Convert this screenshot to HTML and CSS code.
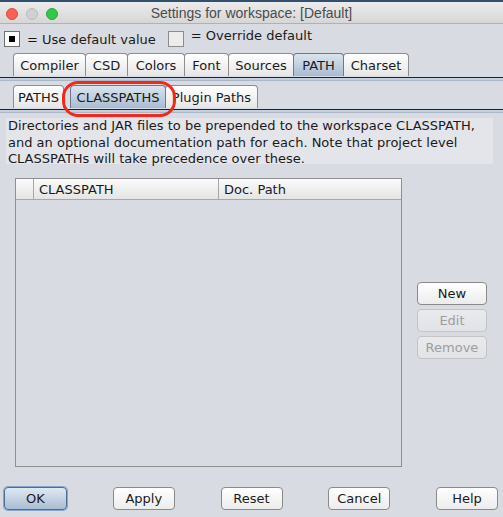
FILE: index.html
```html
<!DOCTYPE html>
<html lang="en">
<head>
    <meta charset="UTF-8">
    <title>Settings for workspace: [Default]</title>
    <link rel="stylesheet" href="styles.css">
</head>
<body>
    <div class="window">
        <div class="titlebar">
            <div class="lights">
                <span class="light red"></span>
                <span class="light gray"></span>
                <span class="light green"></span>
            </div>
            <div class="title">Settings for workspace: [Default]</div>
        </div>

        <div class="legend">
            <span class="check checked"><i></i></span>
            <span class="legend-text">= Use default value</span>
            <span class="check"></span>
            <span class="legend-text up">= Override default</span>
        </div>

        <ul class="tabs main">
            <li>Compiler</li>
            <li>CSD</li>
            <li>Colors</li>
            <li>Font</li>
            <li>Sources</li>
            <li class="active">PATH</li>
            <li>Charset</li>
        </ul>
        <div class="tabline"></div>

        <div class="subtabs-wrap">
            <ul class="tabs sub">
                <li class="paths">PATHS</li>
                <li class="active classpaths">CLASSPATHS</li>
                <li class="plugin">Plugin Paths</li>
            </ul>
            <div class="marker"></div>
        </div>
        <div class="tabline"></div>

        <p class="desc">Directories and JAR files to be prepended to the workspace CLASSPATH, and an optional documentation path for each. Note that project level CLASSPATHs will take precedence over these.</p>

        <div class="content">
            <div class="table">
                <div class="thead">
                    <div class="th first"></div>
                    <div class="th path">CLASSPATH</div>
                    <div class="th doc">Doc. Path</div>
                </div>
                <div class="tbody"></div>
            </div>
            <div class="side">
                <button class="btn">New</button>
                <button class="btn" disabled>Edit</button>
                <button class="btn" disabled>Remove</button>
            </div>
        </div>

        <div class="footer">
            <button class="btn default">OK</button>
            <button class="btn">Apply</button>
            <button class="btn">Reset</button>
            <button class="btn">Cancel</button>
            <button class="btn">Help</button>
        </div>
    </div>
</body>
</html>
```

FILE: styles.css
```css
body {
    margin: 0;
    background: #d8dbe1;
    font-family: "DejaVu Sans", sans-serif;
    font-size: 12px;
    color: #1a1a1a;
}

.window {
    width: 503px;
    height: 517px;
    border-top: 2px solid #34506e;
    box-sizing: border-box;
    display: flex;
    flex-direction: column;
}

/* Title bar */
.titlebar {
    position: relative;
    height: 21px;
    background: linear-gradient(to bottom, #ececec, #d6d6d6);
    border-bottom: 1px solid #b1b1b1;
    display: flex;
    align-items: center;
    justify-content: center;
}

.lights {
    position: absolute;
    left: 6px;
    top: 6px;
    display: flex;
    gap: 8px;
}

.light {
    width: 12px;
    height: 12px;
    border-radius: 50%;
    box-sizing: border-box;
}

.light.red {
    background: #fc5f57;
    border: 1px solid #de4a42;
}

.light.gray {
    background: #d0d0d0;
    border: 1px solid #bcbcbc;
}

.light.green {
    background: #34c84a;
    border: 1px solid #27a83a;
}

.title {
    font-family: "Liberation Sans", sans-serif;
    font-size: 14px;
    color: #4b4b4b;
    margin-top: 1px;
}

/* Legend */
.legend {
    height: 29px;
    display: flex;
    align-items: center;
    padding-left: 4px;
}

.check {
    width: 14px;
    height: 14px;
    border: 1px solid #8c8c8c;
    background: #ececec;
    display: flex;
    align-items: center;
    justify-content: center;
}

.check.checked {
    background: #fafafa;
    border-color: #6f6f6f;
}

.check i {
    width: 6px;
    height: 6px;
    background: #000;
}

.legend-text {
    margin-left: 7px;
    margin-right: 12px;
    font-size: 13px;
    position: relative;
    top: 1px;
}

.legend-text.up {
    top: -3px;
}

/* Tabs */
.tabs {
    list-style: none;
    margin: 0;
    padding: 0 0 0 13px;
    display: flex;
    height: 23px;
}

.tabs li {
    box-sizing: border-box;
    height: 23px;
    border: 1px solid #8e8e8e;
    border-bottom: none;
    border-radius: 4px 4px 0 0;
    background: linear-gradient(to bottom, #ffffff, #e6e6e6);
    display: flex;
    align-items: center;
    justify-content: center;
    font-size: 13px;
    margin-right: -1px;
}

.tabs li.active {
    background: linear-gradient(to bottom, #dbe4ee, #a8bcd1);
    border-color: #6b7a8c;
    z-index: 1;
}

.tabs.main li:nth-child(1) { width: 73px; }
.tabs.main li:nth-child(2) { width: 43px; }
.tabs.main li:nth-child(3) { width: 58px; }
.tabs.main li:nth-child(4) { width: 45px; }
.tabs.main li:nth-child(5) { width: 66px; }
.tabs.main li:nth-child(6) { width: 51px; }
.tabs.main li:nth-child(7) { width: 66px; }

.tabs.sub li.paths { width: 51px; }
.tabs.sub li.classpaths { width: 96px; margin-left: 7px; }
.tabs.sub li.plugin { width: 93px; }

.tabline {
    height: 2px;
    border-top: 1px solid #1c2432;
    border-bottom: 1px solid #a9b7c9;
    background: #c5cedb;
    margin-top: 1px;
    margin-bottom: 4px;
}

.subtabs-wrap {
    position: relative;
}

.marker {
    position: absolute;
    left: 62px;
    top: -4px;
    width: 114px;
    height: 36px;
    border: 3px solid #f0291c;
    border-radius: 16px;
    box-sizing: border-box;
    z-index: 2;
}

/* Description */
.desc {
    margin: 1px 10px 0 6px;
    padding: 0 2px;
    background: #e3e5ea;
    font-size: 13px;
    line-height: 16.5px;
    height: 46px;
}

/* Table + side buttons */
.content {
    display: flex;
    margin-top: 14px;
    padding-left: 15px;
}

.table {
    width: 387px;
    height: 289px;
    border: 1px solid #8f8f8f;
    box-sizing: border-box;
    display: flex;
    flex-direction: column;
}

.thead {
    height: 20px;
    display: flex;
    background: linear-gradient(to bottom, #fbfbfb, #e4e4e4);
    border-bottom: 1px solid #a7a7a7;
}

.th {
    font-size: 13px;
    display: flex;
    align-items: center;
    padding-left: 5px;
    border-right: 1px solid #a7a7a7;
}

.th.first {
    width: 12px;
}

.th.path {
    width: 179px;
}

.th.doc {
    flex: 1;
    border-right: none;
}

.tbody {
    flex: 1;
}

.side {
    display: flex;
    flex-direction: column;
    gap: 4px;
    margin-left: 15px;
    padding-top: 104px;
}

.btn {
    font-family: "DejaVu Sans", sans-serif;
    font-size: 13px;
    color: #1a1a1a;
    width: 70px;
    height: 23px;
    padding: 0;
    border: 1px solid #8a8a8a;
    border-radius: 4px;
    background: linear-gradient(to bottom, #ffffff, #ececec);
}

.btn:disabled {
    color: #9d9d9d;
    border-color: #c4c4c4;
    background: linear-gradient(to bottom, #e9eaed, #e1e3e7);
}

/* Footer */
.footer {
    display: flex;
    justify-content: space-between;
    padding: 0 5px 0 4px;
    margin-top: 20px;
}

.footer .btn {
    width: 62px;
}

.footer .btn.default {
    width: 63px;
    border-color: #4f6d93;
    background: linear-gradient(to bottom, #dfe8f2, #a9bdd3);
    box-shadow: 0 0 0 1px #87a6cb;
}
```
